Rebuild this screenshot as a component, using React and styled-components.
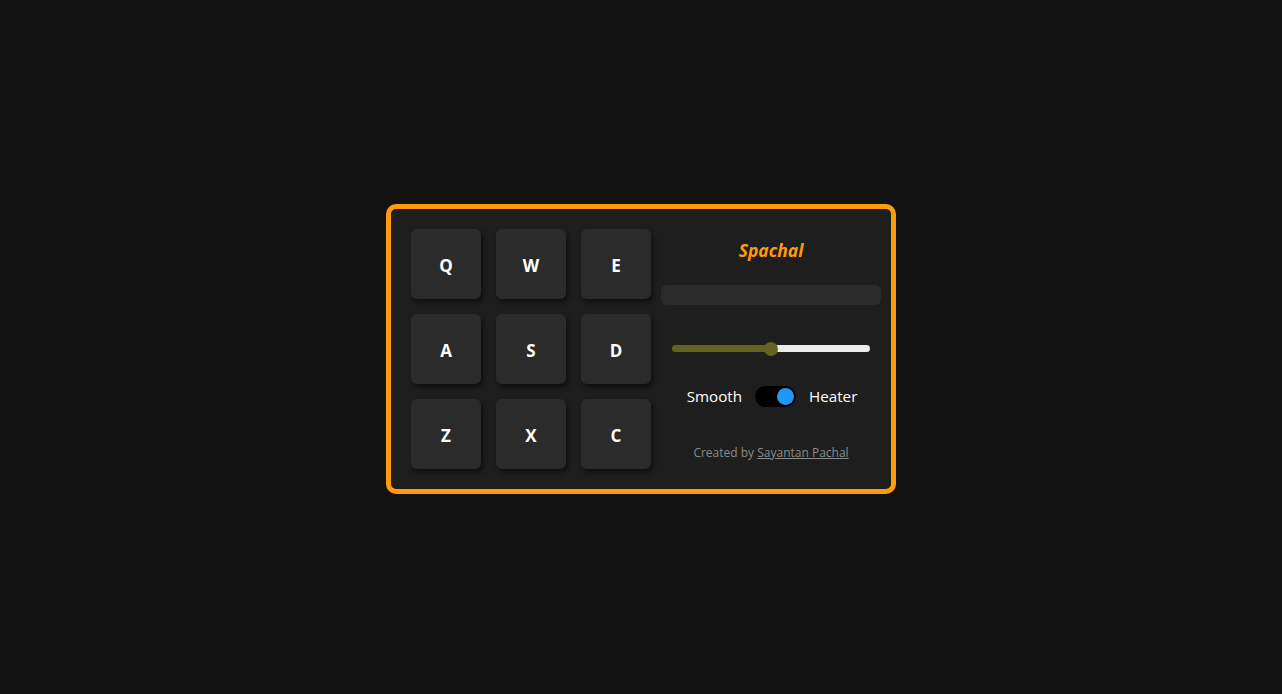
import React, { useState } from 'react';
import styled, { createGlobalStyle } from 'styled-components';

const KEYS = ['Q', 'W', 'E', 'A', 'S', 'D', 'Z', 'X', 'C'];

const GlobalStyle = createGlobalStyle`
  html, body {
    margin: 0;
    height: 100%;
    background: #121212;
  }
  body {
    font-family: "Open Sans", "Noto Sans", sans-serif;
  }
  #root {
    height: 100%;
  }
`;

const App = () => {
  const [volume, setVolume] = useState(50);
  const [heater, setHeater] = useState(true);

  return (
    <Page>
      <GlobalStyle />
      <Machine>
        <PadGrid>
          {KEYS.map((k) => (
            <Pad key={k}>{k}</Pad>
          ))}
        </PadGrid>
        <Controls>
          <Logo>Spachal</Logo>
          <Display />
          <Volume
            type="range"
            min="0"
            max="100"
            value={volume}
            onChange={(e) => setVolume(e.target.value)}
            style={{
              background: `linear-gradient(to right, #64631f ${volume}%, #ececec ${volume}%)`,
            }}
          />
          <BankRow>
            <BankLabel>Smooth</BankLabel>
            <Switch $on={heater} onClick={() => setHeater(!heater)}>
              <Knob $on={heater} />
            </Switch>
            <BankLabel>Heater</BankLabel>
          </BankRow>
          <Credit>
            Created by <a href="#">Sayantan Pachal</a>
          </Credit>
        </Controls>
      </Machine>
    </Page>
  );
};

const Page = styled.div`
  box-sizing: border-box;
  height: 100%;
  padding-top: 4px;
  display: flex;
  align-items: center;
  justify-content: center;
`;

const Machine = styled.div`
  display: flex;
  gap: 10px;
  padding: 20px 10px 20px 20px;
  background: #1e1e1e;
  border: 5px solid #ff9a0d;
  border-radius: 10px;
`;

const PadGrid = styled.div`
  display: grid;
  grid-template-columns: repeat(3, 70px);
  grid-auto-rows: 70px;
  gap: 15px;
`;

const Pad = styled.div`
  display: flex;
  align-items: center;
  justify-content: center;
  padding-top: 2px;
  box-sizing: border-box;
  background: #2b2b2b;
  border-radius: 6px;
  box-shadow: 2px 3px 5px rgba(0, 0, 0, 0.55);
  color: #fff;
  font-size: 17px;
  font-weight: 700;
  cursor: pointer;
`;

const Controls = styled.div`
  width: 220px;
  display: flex;
  flex-direction: column;
  align-items: center;
`;

const Logo = styled.div`
  margin-top: 9px;
  height: 24px;
  line-height: 24px;
  color: #ff9a0d;
  font-size: 17.5px;
  font-weight: 700;
  font-style: italic;
`;

const Display = styled.div`
  margin-top: 23px;
  width: 100%;
  height: 20px;
  background: #2a2a2a;
  border-radius: 6px;
`;

const Volume = styled.input`
  -webkit-appearance: none;
  appearance: none;
  margin: 40px 0 0;
  width: 198px;
  height: 7px;
  border-radius: 4px;
  outline: none;

  &::-webkit-slider-thumb {
    -webkit-appearance: none;
    width: 14px;
    height: 14px;
    border-radius: 50%;
    background: #64631f;
    cursor: pointer;
  }
`;

const BankRow = styled.div`
  margin-top: 34px;
  display: flex;
  align-items: center;
  gap: 13px;
  padding-left: 2px;
`;

const BankLabel = styled.span`
  color: #fff;
  font-size: 15.2px;
  line-height: 21px;
`;

const Switch = styled.div`
  position: relative;
  width: 41px;
  height: 21px;
  border-radius: 11px;
  background: #000;
  cursor: pointer;
`;

const Knob = styled.div`
  position: absolute;
  top: 2px;
  left: ${(p) => (p.$on ? '22px' : '2px')};
  width: 17px;
  height: 17px;
  border-radius: 50%;
  background: #2196f3;
`;

const Credit = styled.div`
  margin-top: 38px;
  color: #8a8a8a;
  font-size: 12px;
  line-height: 16px;

  a {
    color: #8a8a8a;
  }
`;

export default App;
